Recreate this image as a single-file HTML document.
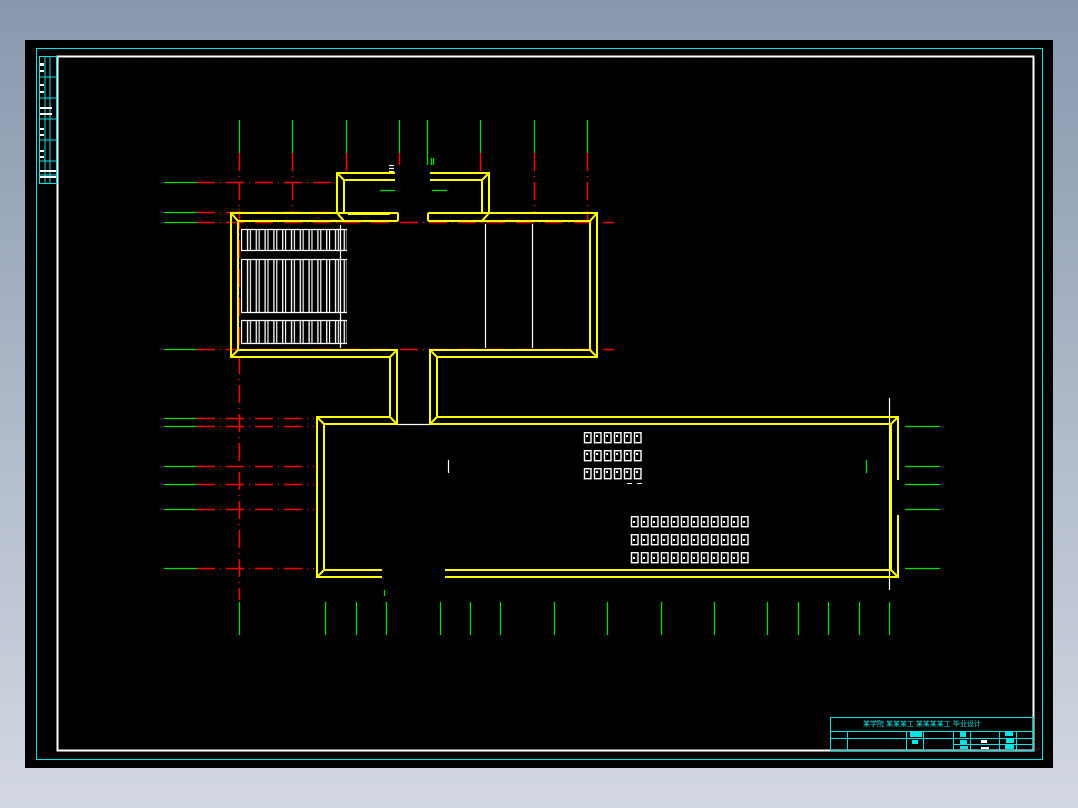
<!DOCTYPE html>
<html><head><meta charset="utf-8"><style>
html,body{margin:0;padding:0;width:1078px;height:808px;overflow:hidden;background:linear-gradient(#8898ae,#d3d8e2);}
svg{position:absolute;left:0;top:0}
</style></head><body>
<svg width="1078" height="808" viewBox="0 0 1078 808" xmlns="http://www.w3.org/2000/svg">
<defs>
<pattern id="st" x="241" y="0" width="8.8" height="808" patternUnits="userSpaceOnUse">
<rect x="0.5" y="0" width="6" height="808" fill="none" stroke="#fff" stroke-width="1.3"/>
</pattern>
<pattern id="tb" x="583" y="432" width="10" height="18" patternUnits="userSpaceOnUse">
<rect x="1.5" y="0.7" width="6.5" height="10" fill="none" stroke="#fff" stroke-width="1.4"/>
<rect x="3" y="3" width="2" height="2" fill="#fff"/>
</pattern>
<pattern id="tb2" x="630" y="516" width="10" height="18" patternUnits="userSpaceOnUse">
<rect x="1.5" y="0.7" width="6.5" height="10" fill="none" stroke="#fff" stroke-width="1.4"/>
<rect x="3" y="5" width="2" height="2" fill="#fff"/>
</pattern>
</defs>
<rect x="25" y="40" width="1028" height="728" fill="#000"/>
<rect x="36.5" y="48.5" width="1006" height="711" fill="none" stroke="#00e5e5"/>
<rect x="57.5" y="56.5" width="976" height="694" fill="none" stroke="#fff" stroke-width="2"/>
<g stroke="#00e5e5" fill="none">
<rect x="39.5" y="56.5" width="17" height="127"/>
<line x1="45" y1="56" x2="45" y2="184"/><line x1="50" y1="56" x2="50" y2="184"/>
<line x1="39" y1="77" x2="57" y2="77"/><line x1="39" y1="98" x2="57" y2="98"/><line x1="39" y1="119" x2="57" y2="119"/><line x1="39" y1="140" x2="57" y2="140"/><line x1="39" y1="161" x2="57" y2="161"/><line x1="39" y1="175" x2="57" y2="175"/>
</g>
<g fill="#fff"><rect x="40" y="63" width="4" height="3"/><rect x="40" y="70" width="4" height="2"/><rect x="40" y="84" width="4" height="2"/><rect x="40" y="91" width="4" height="2"/><rect x="40" y="107" width="12" height="2"/><rect x="40" y="113" width="12" height="2"/><rect x="40" y="128" width="4" height="2"/><rect x="40" y="134" width="4" height="2"/><rect x="40" y="150" width="4" height="2"/><rect x="40" y="156" width="4" height="2"/><rect x="40" y="170" width="16" height="2"/><rect x="40" y="176" width="16" height="2"/></g>

<g stroke="#00e000" stroke-width="1.3">
<line x1="239.5" y1="120" x2="239.5" y2="153"/><line x1="292.5" y1="120" x2="292.5" y2="153"/><line x1="346.5" y1="120" x2="346.5" y2="153"/><line x1="399.5" y1="120" x2="399.5" y2="153"/><line x1="427.5" y1="120" x2="427.5" y2="165"/><line x1="480.5" y1="120" x2="480.5" y2="153"/><line x1="534.5" y1="120" x2="534.5" y2="153"/><line x1="587.5" y1="120" x2="587.5" y2="153"/>
<line x1="431.5" y1="158" x2="431.5" y2="165"/><line x1="433.5" y1="158" x2="433.5" y2="165"/>
</g>
<g stroke="#ff0000" stroke-width="1.5" stroke-dasharray="18,5,1,5">
<line x1="239.5" y1="153" x2="239.5" y2="600"/><line x1="292.5" y1="153" x2="292.5" y2="213"/><line x1="346.5" y1="153" x2="346.5" y2="173"/><line x1="399.5" y1="153" x2="399.5" y2="165"/><line x1="480.5" y1="153" x2="480.5" y2="173"/><line x1="534.5" y1="153" x2="534.5" y2="213"/><line x1="587.5" y1="153" x2="587.5" y2="221"/>
</g>
<g stroke="#00e000" stroke-width="1.3">
<line x1="164" y1="182.5" x2="197" y2="182.5"/><line x1="164" y1="212.5" x2="197" y2="212.5"/><line x1="164" y1="222.5" x2="197" y2="222.5"/><line x1="164" y1="349.5" x2="197" y2="349.5"/>
<line x1="164" y1="418.5" x2="197" y2="418.5"/><line x1="164" y1="426.5" x2="197" y2="426.5"/><line x1="164" y1="466.5" x2="197" y2="466.5"/><line x1="164" y1="484.5" x2="197" y2="484.5"/><line x1="164" y1="509.5" x2="197" y2="509.5"/><line x1="164" y1="568.5" x2="197" y2="568.5"/>
<line x1="905" y1="426.5" x2="940" y2="426.5"/><line x1="905" y1="466.5" x2="940" y2="466.5"/><line x1="905" y1="484.5" x2="940" y2="484.5"/><line x1="905" y1="509.5" x2="940" y2="509.5"/><line x1="905" y1="568.5" x2="940" y2="568.5"/>
<line x1="380" y1="190.5" x2="395" y2="190.5"/><line x1="432" y1="190.5" x2="447" y2="190.5"/>
</g>
<g stroke="#ff0000" stroke-width="1.5" stroke-dasharray="18,5,1,5">
<line x1="197" y1="182.5" x2="337" y2="182.5"/><line x1="197" y1="212.5" x2="337" y2="212.5"/><line x1="197" y1="222.5" x2="614" y2="222.5"/><line x1="197" y1="349.5" x2="614" y2="349.5"/>
<line x1="197" y1="418.5" x2="314" y2="418.5"/><line x1="197" y1="426.5" x2="314" y2="426.5"/><line x1="197" y1="466.5" x2="314" y2="466.5"/><line x1="197" y1="484.5" x2="314" y2="484.5"/><line x1="197" y1="509.5" x2="314" y2="509.5"/><line x1="197" y1="568.5" x2="314" y2="568.5"/>
</g>
<g stroke="#00e000" stroke-width="1.3">
<line x1="239.5" y1="602" x2="239.5" y2="635"/><line x1="325.5" y1="602" x2="325.5" y2="635"/><line x1="356.5" y1="602" x2="356.5" y2="635"/><line x1="386.5" y1="602" x2="386.5" y2="635"/><line x1="440.5" y1="602" x2="440.5" y2="635"/><line x1="470.5" y1="602" x2="470.5" y2="635"/><line x1="500.5" y1="602" x2="500.5" y2="635"/><line x1="554.5" y1="602" x2="554.5" y2="635"/><line x1="607.5" y1="602" x2="607.5" y2="635"/><line x1="661.5" y1="602" x2="661.5" y2="635"/><line x1="714.5" y1="602" x2="714.5" y2="635"/><line x1="767.5" y1="602" x2="767.5" y2="635"/><line x1="798.5" y1="602" x2="798.5" y2="635"/><line x1="828.5" y1="602" x2="828.5" y2="635"/><line x1="859.5" y1="602" x2="859.5" y2="635"/><line x1="889.5" y1="602" x2="889.5" y2="635"/>
<line x1="384.5" y1="590" x2="384.5" y2="596"/><line x1="866.5" y1="460" x2="866.5" y2="473"/>
</g>
<g stroke="#fff" stroke-width="1.2">
<line x1="889.5" y1="398" x2="889.5" y2="590"/><line x1="485.5" y1="224" x2="485.5" y2="348"/><line x1="532.5" y1="224" x2="532.5" y2="348"/><line x1="340.5" y1="225" x2="340.5" y2="348"/>
<line x1="397" y1="424.5" x2="430" y2="424.5"/><line x1="448.5" y1="460" x2="448.5" y2="473"/>
<line x1="389" y1="165.5" x2="394" y2="165.5"/><line x1="389" y1="168.5" x2="394" y2="168.5"/><line x1="389" y1="171.5" x2="394" y2="171.5"/>
</g>
<g stroke="#ffff00" stroke-width="2" fill="none">
<path d="M398 213H231V357H390V417H317V577H382"/>
<path d="M445 577H898V515 M898 480V417H437V357H597V213H428"/>
<path d="M398 221H238V350H397V424H324V570H382"/>
<path d="M445 570H891V424H430V350H590V221H428"/>
<path d="M398 213V221 M428 213V221"/>
<path d="M337 213V173H395 M430 173H489V213"/>
<path d="M344 213V180H395 M430 180H482V213"/>
<path d="M231 213L238 221 M231 357L238 350 M597 213L590 221 M597 357L590 350 M337 173L344 180 M489 173L482 180 M317 417L324 424 M317 577L324 570 M898 417L891 424 M898 577L891 570 M390 357L397 350 M437 357L430 350 M390 417L397 424 M437 417L430 424 M337 213L344 221 M489 213L482 221"/>
<line x1="348" y1="214" x2="390" y2="214"/>
</g>
<rect x="241" y="229" width="106" height="22" fill="url(#st)"/>
<rect x="241" y="259" width="106" height="54" fill="url(#st)"/>
<rect x="241" y="320" width="106" height="24" fill="url(#st)"/>
<g stroke="#fff" stroke-width="1.3" fill="none"><line x1="241" y1="229.5" x2="347" y2="229.5"/><line x1="241" y1="250.5" x2="347" y2="250.5"/><line x1="241" y1="259.5" x2="347" y2="259.5"/><line x1="241" y1="312.5" x2="347" y2="312.5"/><line x1="241" y1="320.5" x2="347" y2="320.5"/><line x1="241" y1="343.5" x2="347" y2="343.5"/></g>
<rect x="583" y="432" width="60" height="50" fill="url(#tb)"/>
<rect x="630" y="516" width="120" height="50" fill="url(#tb2)"/>
<g fill="#fff"><rect x="627" y="483" width="5" height="1"/><rect x="637" y="483" width="5" height="1"/></g>
<g stroke="#00e5e5" fill="none">
<rect x="830.5" y="717.5" width="203" height="33"/>
<line x1="830" y1="731.5" x2="1034" y2="731.5"/><line x1="830" y1="738.5" x2="1034" y2="738.5"/>
<line x1="847.5" y1="731" x2="847.5" y2="751"/><line x1="906.5" y1="731" x2="906.5" y2="751"/><line x1="923.5" y1="731" x2="923.5" y2="751"/><line x1="953.5" y1="731" x2="953.5" y2="751"/><line x1="970.5" y1="731" x2="970.5" y2="751"/><line x1="999.5" y1="731" x2="999.5" y2="751"/><line x1="1016.5" y1="731" x2="1016.5" y2="751"/>
<line x1="953" y1="744.5" x2="1034" y2="744.5"/>
</g>
<text x="863" y="726" fill="#00e5e5" font-size="7" font-family="'Liberation Sans','Noto Sans CJK SC',sans-serif">某学院 某某某工 某某某某工 毕业设计</text>
<g fill="#00e5e5"><rect x="910" y="732" width="12" height="5"/><rect x="912" y="740" width="6" height="4"/><rect x="960" y="732" width="6" height="5"/><rect x="960" y="740" width="7" height="4"/><rect x="960" y="746" width="8" height="3"/><rect x="1005" y="731" width="8" height="5"/><rect x="1006" y="739" width="8" height="4"/><rect x="1005" y="745" width="9" height="4"/></g>
<g fill="#fff"><rect x="981" y="740" width="6" height="3"/><rect x="981" y="747" width="8" height="2"/></g>
</svg>
</body></html>
